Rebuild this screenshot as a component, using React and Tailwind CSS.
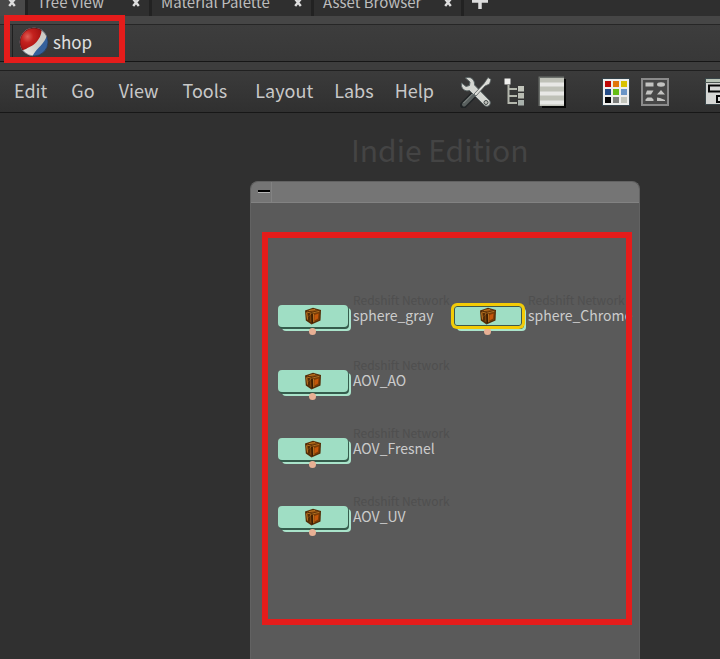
import React from "react";

const tabs = [
  { label: "Tree View", width: "w-[124px]" },
  { label: "Material Palette", width: "w-[162px]" },
  { label: "Asset Browser", width: "w-[150px]" },
];

const editMenus = ["Edit", "Go", "View", "Tools"];
const paneMenus = ["Layout", "Labs", "Help"];

const nodes = [
  { name: "sphere_gray", place: "left-[278px] top-[192px]" },
  { name: "sphere_Chrome", place: "left-[453px] top-[192px]", selected: true },
  { name: "AOV_AO", place: "left-[278px] top-[257px]" },
  { name: "AOV_Fresnel", place: "left-[278px] top-[325px]" },
  { name: "AOV_UV", place: "left-[278px] top-[393px]" },
];

function CloseIcon() {
  return (
    <svg width="8" height="9" viewBox="0 0 8 9" aria-hidden="true">
      <path d="M1.2 1l5.6 7M6.8 1L1.2 8" stroke="#dedede" strokeWidth="2.4" />
    </svg>
  );
}

function ShopIcon() {
  return (
    <svg width="30" height="30" viewBox="0 0 30 30" aria-hidden="true">
      <defs>
        <clipPath id="ball"><circle cx="15" cy="15" r="14.2" /></clipPath>
        <radialGradient id="ballRed" cx=".38" cy=".4" r=".65">
          <stop offset="0" stopColor="#dd5f57" />
          <stop offset=".4" stopColor="#c4211e" />
          <stop offset="1" stopColor="#a31010" />
        </radialGradient>
        <linearGradient id="ballWhite" x1="1" y1="0" x2="0" y2="1">
          <stop offset="0" stopColor="#c9c9c4" />
          <stop offset=".5" stopColor="#cfcfc9" />
          <stop offset="1" stopColor="#f4f4f2" />
        </linearGradient>
      </defs>
      <g clipPath="url(#ball)">
        <rect width="30" height="30" fill="#35619c" />
        <path d="M0 0H26L28 8C26 17 18 20 13 30H0Z" fill="url(#ballWhite)" />
        <path d="M0 0H22Q24 6 19 13C15 19 11 19 7 22Q4 23 2 24L0 20Z" fill="url(#ballRed)" />
      </g>
      <circle cx="15" cy="15" r="14" fill="none" stroke="#1d2026" strokeOpacity=".45" />
    </svg>
  );
}

function ToolsIcon() {
  return (
    <svg width="32" height="32" viewBox="0 0 32 32" aria-hidden="true">
      <path d="M3.5 29L15 17.5" stroke="#202426" strokeWidth="7" strokeLinecap="round" />
      <path d="M4 28.5L14.5 18" stroke="#59605f" strokeWidth="4" strokeLinecap="round" />
      <path d="M3.5 27L13.5 17" stroke="#8b918f" strokeWidth="1" />
      <path d="M5.5 2C10 0 15 3 14.5 9L29.5 24.5C32 28 28 32 24.5 29.5L9.5 14.5C5 16 .5 12.5 1.5 7L6 10.5L9.5 9.5L10 6Z" fill="#d5d7d2" stroke="#5c6667" strokeWidth="1" />
      <path d="M14 18L24 7.5L28 1.5L31 3.5L29.5 8L25 10L16 20Z" fill="#dcddd8" stroke="#535b5b" strokeWidth=".8" />
      <circle cx="26" cy="26.5" r="2" fill="#bbbdb8" stroke="#444a4a" />
    </svg>
  );
}

function TreeIcon() {
  return (
    <svg width="22" height="28" viewBox="0 0 22 28" aria-hidden="true">
      <path d="M4.5 7V25H13M4.5 11H13M4.5 18H13" fill="none" stroke="#b4b7ad" strokeWidth="2" />
      <rect x=".5" y=".5" width="6" height="6" fill="#f0f0ee" />
      <rect x="14" y="8" width="6" height="5.5" fill="#c2c5bb" />
      <rect x="14" y="15" width="6" height="5.5" fill="#b9bcb2" />
      <rect x="14" y="22" width="6" height="5.5" fill="#a8b0ab" />
    </svg>
  );
}

function ListIcon() {
  return (
    <svg width="28" height="32" viewBox="0 0 28 32" aria-hidden="true">
      <path d="M27 3V31H4" fill="none" stroke="#080808" strokeWidth="2" />
      <rect x=".5" y=".5" width="25.5" height="29.5" fill="#6c706c" />
      <rect x="2" y="2" width="24" height="28" fill="#bfc1b8" />
      <path d="M2 8.5H26M2 17.5H26M2 26.5H26" stroke="#e8e8e6" strokeWidth="4" />
    </svg>
  );
}

function PaletteIcon() {
  const colors = ["#be0505", "#e07509", "#d8c100", "#244b86", "#65bd15", "#6a96c7", "#050505", "#7c7e7c", "#c2c5bc"];
  return (
    <svg width="28" height="28" viewBox="0 0 28 28" aria-hidden="true">
      <rect x=".5" y=".5" width="27" height="27" fill="#edeeed" stroke="#34434b" />
      {colors.map((color, i) => (
        <rect key={color} x={3 + (i % 3) * 8} y={3 + Math.floor(i / 3) * 8} width="6" height="6" fill={color} />
      ))}
    </svg>
  );
}

function ShapesIcon() {
  return (
    <svg width="28" height="28" viewBox="0 0 28 28" aria-hidden="true">
      <rect x="1" y="1" width="26" height="26" fill="#474747" stroke="#8b8b8b" strokeWidth="2" />
      <g fill="#c3c3c1">
        <rect x="4.5" y="4.5" width="8" height="4" />
        <ellipse cx="20" cy="6.5" rx="4" ry="2.2" />
        <path d="M6 12.5h6.5l-2.5 4H4.5zM20 12l4 4.5h-8zM4.5 23v-1.5l2-2h4l2 2V23zM16 23v-3.5l3 .5 5 2v1z" />
      </g>
    </svg>
  );
}

function NetworkIcon() {
  return (
    <svg width="28" height="30" viewBox="0 0 28 30" aria-hidden="true">
      <rect x=".5" y="1.5" width="27" height="26" fill="#d5d6d4" stroke="#394549" />
      <rect x="1" y="2" width="26" height="3" fill="#b8c3b6" />
      <path d="M0 5.5H28" stroke="#4d5752" />
      <path d="M4 8.5H24V14.5H4ZM12 19H24V25H12Z" fill="#d7d8d6" stroke="#050505" strokeWidth="2" />
    </svg>
  );
}

function CrateIcon() {
  return (
    <svg width="18" height="18" viewBox="0 0 18 18" aria-hidden="true">
      <path d="M1 3.5L9 .8L17 3L16.5 13.5L7.5 17.5L1.8 13.5Z" fill="#532b06" />
      <path d="M3 3.7L9 1.9L15 3.2L8.5 4.8Z" fill="#8f4e10" />
      <path d="M2.5 5L7 6.5L7.5 15.5L3 12.5Z" fill="#7b420a" />
      <path d="M8.7 6.5L15.8 4.5L15.3 12.7L9 15.6Z" fill="#7c3d07" />
      <path d="M10.5 8L14.5 6.5L14 11.5L10.5 13.5Z" fill="#c4560a" />
      <path d="M2.5 5.5L3.5 12.5M3.5 10L6.5 7.5M5 3.5L11 2.5M9.5 7L9.8 15M3 5L7.5 6.3L15.5 4.2" fill="none" stroke="#c98128" strokeWidth=".8" />
      <path d="M5 6V13.5M8 6.5L8.3 16" stroke="#301703" />
    </svg>
  );
}

function Node({ name, place, selected }) {
  return (
    <button type="button" className={`absolute flex items-start text-left ${place}`}>
      <span className="relative mr-[5px] h-[30px] w-[70px]">
        <span className="absolute top-[3px] left-1 h-[23px] w-[69px] rounded-[4px] bg-[#a9e3ca]" />
        <span className="absolute top-px left-px h-[23px] w-[70px] rounded-[4px] bg-[#355c4c]" />
        <span className="absolute bottom-0 left-[31px] size-[7px] rounded-full bg-[#e8b094]" />
        <span
          className={`absolute top-0 left-0 flex h-[22px] w-[70px] items-center justify-center rounded-[4px] bg-[#9fdec4] ${
            selected ? "border border-[#f4cb05] ring-2 ring-[#f4cb05] inset-ring-1 inset-ring-[#40584a]" : ""
          }`}
        >
          <CrateIcon />
        </span>
      </span>
      <span className="-mt-[12px] flex flex-col whitespace-nowrap">
        <span className="text-[12px] leading-[14px] text-[#4f4f4f]">Redshift Network</span>
        <span className="text-[14px] leading-[16px] text-[#cccccc]">{name}</span>
      </span>
    </button>
  );
}

export default function App() {
  return (
    <div className="relative flex min-h-screen flex-col overflow-hidden bg-[#303030] font-['Noto_Sans_CJK_SC','Open_Sans',sans-serif] text-[#c8c8c8]">
      <nav aria-label="Pane tabs" className="flex h-4 items-end overflow-hidden bg-[#2f2f2f]">
        <div className="flex h-4 w-[25px] items-end justify-end bg-[#494949] pr-[9px]">
          <button type="button" aria-label="Close pane" className="mb-[9px]"><CloseIcon /></button>
        </div>
        {tabs.map((tab) => (
          <div key={tab.label} className={`flex h-4 items-end justify-between border-l-3 border-[#222222] pr-[9px] pl-[9px] ${tab.width}`}>
            <button type="button" className="mb-1 text-[15px] leading-[20px] whitespace-nowrap text-[#bdbdbd]">{tab.label}</button>
            <button type="button" aria-label={`Close ${tab.label}`} className="mb-[9px]"><CloseIcon /></button>
          </div>
        ))}
        <div className="flex h-4 items-end border-l-3 border-[#222222] pl-2">
          <button type="button" aria-label="Add pane tab" className="mb-[7px]">
            <svg width="16" height="16" viewBox="0 0 16 16" aria-hidden="true">
              <path d="M8 0V16M0 8H16" stroke="#dddddd" strokeWidth="3.5" />
            </svg>
          </button>
        </div>
      </nav>

      <div className="bg-[#464646] pt-2">
        <div className="flex h-[38px] border-y border-t-[#262626] border-b-[#161616] bg-gradient-to-b from-[#3d3d3d] to-[#383838] pl-3">
          <button type="button" className="flex items-center gap-1 border-l border-[#1f1f1f] pb-[3px] pl-[6px] text-[17px] text-[#e0e0e0]">
            <ShopIcon />
            shop
          </button>
        </div>
      </div>
      <div className="h-2 bg-[#3d3d3d]" />

      <header className="flex h-[43px] items-center border-y border-t-[#202020] border-b-[#171717] bg-gradient-to-b from-[#3b3b3b] to-[#303030] pl-[14px]">
        <nav aria-label="Menu" className="flex w-[420px] shrink-0 justify-between pb-1 text-[18px] leading-[28px]">
          <div className="flex gap-6">
            {editMenus.map((menu) => (
              <button key={menu} type="button">{menu}</button>
            ))}
          </div>
          <div className="flex gap-[21px]">
            {paneMenus.map((menu) => (
              <button key={menu} type="button">{menu}</button>
            ))}
          </div>
        </nav>
        <div className="ml-[26px] flex shrink-0 items-center">
          <button type="button" aria-label="Tools" className="mr-3"><ToolsIcon /></button>
          <button type="button" aria-label="Tree view" className="mr-3"><TreeIcon /></button>
          <button type="button" aria-label="List view" className="mr-9"><ListIcon /></button>
          <button type="button" aria-label="Color palette" className="mr-[11px]"><PaletteIcon /></button>
          <button type="button" aria-label="Shape palette" className="mr-9"><ShapesIcon /></button>
          <button type="button" aria-label="Network box"><NetworkIcon /></button>
        </div>
      </header>

      <main className="relative flex-1">
        <p className="absolute top-4 left-[351px] text-[30px] leading-[40px] whitespace-nowrap text-[#444444]">Indie Edition</p>
        <section aria-label="Network box" className="absolute top-[68px] bottom-0 left-[250px] w-[390px] overflow-hidden rounded-t-[8px] border-x border-t border-[#626262] bg-[#5a5a5a]">
          <div className="flex h-[21px] border-b border-[#828282] bg-[#757575]">
            <button type="button" aria-label="Collapse" className="flex w-[21px] items-center justify-center border-r border-[#828282] pb-px pl-[5px]">
              <span className="h-[3px] w-3 border-b border-[#b5b5b5] bg-black" />
            </button>
          </div>
        </section>
        {nodes.map((node) => (
          <Node key={node.name} {...node} />
        ))}
        <div className="pointer-events-none absolute top-[119px] left-[262px] h-[393px] w-[370px] border-6 border-[#e51c1b]" />
      </main>

      <div className="pointer-events-none absolute top-[15px] left-1 h-12 w-[121px] border-6 border-[#e51c1b]" />
    </div>
  );
}
